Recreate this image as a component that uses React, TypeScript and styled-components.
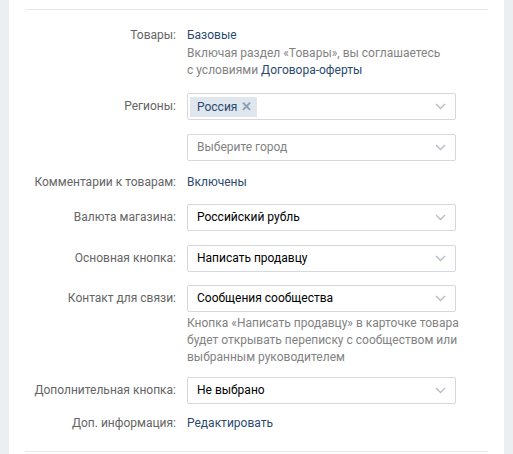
import styled, { createGlobalStyle } from 'styled-components';

const GlobalStyle = createGlobalStyle`
    html, body {
        margin: 0;
        padding: 0;
        background: #edeef0;
    }

    body {
        font-family: Roboto, "Liberation Sans", sans-serif;
        font-size: 12px;
        -webkit-font-smoothing: antialiased;
    }
`;

const Page = styled.div`
    width: 513px;
    height: 454px;
    overflow: hidden;
    background: #edeef0;
`;

const Card = styled.div`
    margin-left: 9px;
    width: 495px;
    height: 100%;
    box-sizing: border-box;
    background: #fff;
    padding: 9px 16px 0;
`;

const Divider = styled.div`
    height: 1px;
    background: #e7e8ec;
`;

const Form = styled.div`
    display: flex;
    flex-direction: column;
    padding: 17px 0 19px;
`;

const Row = styled.div<{ $spacing?: number }>`
    display: grid;
    grid-template-columns: 151px 269px;
    column-gap: 11px;
    margin-top: ${p => p.$spacing ?? 0}px;
`;

const Label = styled.div<{ $tall?: boolean }>`
    color: #656565;
    text-align: right;
    line-height: ${p => (p.$tall ? '27px' : '17px')};
    white-space: nowrap;
`;

const Field = styled.div`
    display: flex;
    flex-direction: column;
`;

const Value = styled.div`
    color: #2b4a6e;
    line-height: 17px;
`;

const Hint = styled.div<{ $spacing?: number }>`
    color: #828282;
    line-height: 17px;
    white-space: nowrap;
    margin-top: ${p => p.$spacing ?? 0}px;
`;

const Link = styled.a`
    color: #2b4a6e;
    text-decoration: none;
`;

const SelectBox = styled.div`
    display: flex;
    align-items: center;
    height: 27px;
    box-sizing: border-box;
    border: 1px solid #d3d9de;
    border-radius: 2px;
    padding: 0 9px 0 9px;
    background: #fff;
`;

const TagsBox = styled(SelectBox)`
    padding-left: 2px;
`;

const SelectText = styled.div<{ $placeholder?: boolean }>`
    flex: 1;
    color: ${p => (p.$placeholder ? '#828282' : '#000')};
    line-height: 17px;
`;

const Tag = styled.div`
    display: flex;
    align-items: center;
    height: 20px;
    padding: 0 5px 0 7px;
    background: #dfe6ed;
    color: #2b4a6e;
    gap: 4px;
`;

const TagRemove = styled.span`
    color: #8a9fb5;
    font-size: 13px;
    font-weight: 700;
    line-height: 1;
`;

const Spacer = styled.div`
    flex: 1;
`;

const Chevron = () => (
    <svg width="11" height="7" viewBox="0 0 11 7" fill="none">
        <path d="M1 1l4.5 4.5L10 1" stroke="#b4bcc6" strokeWidth="1.3" />
    </svg>
);

const Select = ({ value, placeholder }: { value?: string; placeholder?: string }) => (
    <SelectBox>
        <SelectText $placeholder={!value}>{value ?? placeholder}</SelectText>
        <Chevron />
    </SelectBox>
);

export default function App() {
    return (
        <Page>
            <GlobalStyle />
            <Card>
                <Divider />
                <Form>
                    <Row>
                        <Label>Товары:</Label>
                        <Field>
                            <Value>Базовые</Value>
                            <Hint $spacing={1}>
                                Включая раздел «Товары», вы соглашаетесь
                                <br />с условиями <Link href="#">Договора-оферты</Link>
                            </Hint>
                        </Field>
                    </Row>

                    <Row $spacing={14}>
                        <Label $tall>Регионы:</Label>
                        <TagsBox>
                            <Tag>
                                Россия <TagRemove>✕</TagRemove>
                            </Tag>
                            <Spacer />
                            <Chevron />
                        </TagsBox>
                    </Row>

                    <Row $spacing={14}>
                        <Label $tall />
                        <Select placeholder="Выберите город" />
                    </Row>

                    <Row $spacing={13}>
                        <Label>Комментарии к товарам:</Label>
                        <Value>Включены</Value>
                    </Row>

                    <Row $spacing={13}>
                        <Label $tall>Валюта магазина:</Label>
                        <Select value="Российский рубль" />
                    </Row>

                    <Row $spacing={14}>
                        <Label $tall>Основная кнопка:</Label>
                        <Select value="Написать продавцу" />
                    </Row>

                    <Row $spacing={13}>
                        <Label $tall>Контакт для связи:</Label>
                        <Field>
                            <Select value="Сообщения сообщества" />
                            <Hint $spacing={3}>
                                Кнопка «Написать продавцу» в карточке товара
                                <br />
                                будет открывать переписку с сообществом или
                                <br />
                                выбранным руководителем
                            </Hint>
                        </Field>
                    </Row>

                    <Row $spacing={11}>
                        <Label $tall>Дополнительная кнопка:</Label>
                        <Select value="Не выбрано" />
                    </Row>

                    <Row $spacing={11}>
                        <Label>Доп. информация:</Label>
                        <Value>Редактировать</Value>
                    </Row>
                </Form>
                <Divider />
            </Card>
        </Page>
    );
}
